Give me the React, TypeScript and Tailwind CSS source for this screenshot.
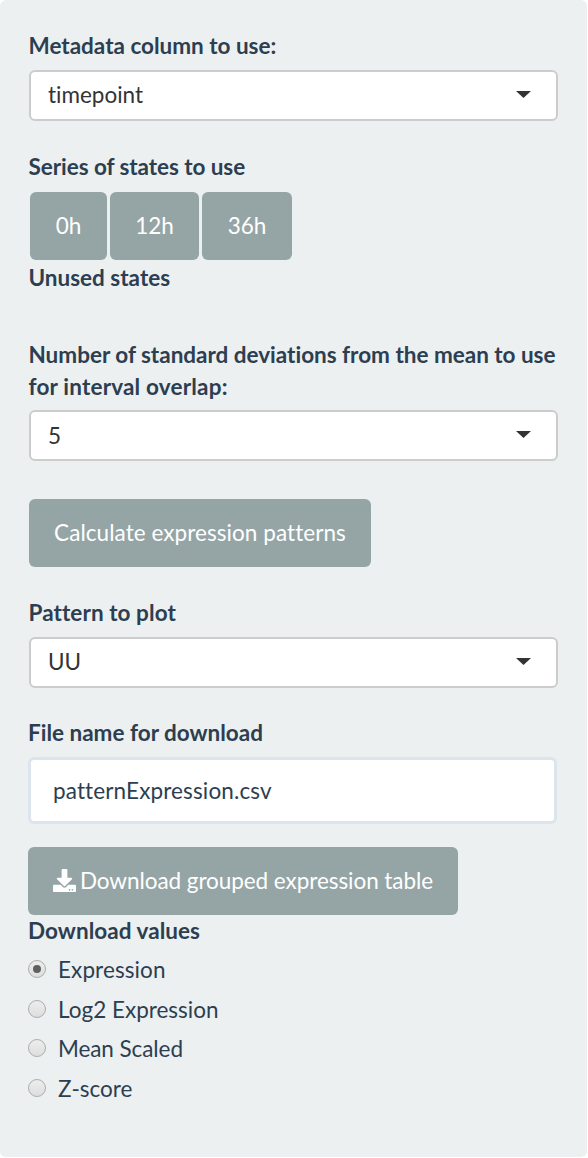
import { useState } from "react";
import type { ReactNode } from "react";
import { FaDownload } from "react-icons/fa";

function Label({ children, className = "" }: { children: ReactNode; className?: string }) {
  return <div className={`text-[22.5px] font-bold leading-8 text-[#2c3e50] ${className}`}>{children}</div>;
}

function Select({ value, className = "", textClass = "pb-[2px]" }: { value: string; className?: string; textClass?: string }) {
  return (
    <button
      type="button"
      className={`flex h-[51px] w-[529px] items-center justify-between rounded-[6px] border-2 border-[#cccccc] bg-white pr-[25px] pl-[17px] text-[22.5px] leading-8 text-[#333333] ${className}`}
    >
      <span className={textClass}>{value}</span>
      <svg width="15" height="7" viewBox="0 0 15 7" className="mb-[2px]">
        <path d="M0 0H15L7.5 7Z" fill="#333333" />
      </svg>
    </button>
  );
}

function Button({ children, className = "" }: { children: ReactNode; className?: string }) {
  return (
    <button
      type="button"
      className={`flex h-[68px] items-center justify-center rounded-[6px] bg-[#95a5a6] text-[22.5px] leading-8 whitespace-nowrap text-white ${className}`}
    >
      {children}
    </button>
  );
}

const values = [
  { name: "Expression", row: "h-10", text: "tracking-[0.1px]" },
  { name: "Log2 Expression", row: "h-10", text: "" },
  { name: "Mean Scaled", row: "h-[38px]", text: "tracking-[-0.08px]" },
  { name: "Z-score", row: "h-[42px]", text: "" },
];

export default function App() {
  const [selected, setSelected] = useState("Expression");
  const [fileName, setFileName] = useState("patternExpression.csv");

  return (
    <div className="h-[1158px] w-[588px] bg-white font-['Lato',sans-serif] [font-variant-ligatures:none]">
      <div className="flex h-[1157px] w-[587px] flex-col items-start rounded-[6px] bg-[#ecf0f1] pt-[30px] pl-[28px]">
        <Label className="pl-[0.5px]">Metadata column to use:</Label>
        <Select value="timepoint" className="mt-[8px] ml-px" />

        <Label className="mt-[30px] pl-[0.5px] tracking-[-0.06px]">Series of states to use</Label>
        <div className="mt-[9px] ml-[2px] flex gap-[3px]">
          <Button className="w-[77px]">0h</Button>
          <Button className="w-[89px]">12h</Button>
          <Button className="w-[90px]">36h</Button>
        </div>
        <Label className="mt-[2px] pl-[0.5px]">Unused states</Label>

        <Label className="mt-[45px] w-[540px] pl-[0.5px]">
          <span className="block tracking-[-0.01px]">Number of standard deviations from the mean to use</span>
          <span className="block tracking-[0.19px]">for interval overlap:</span>
        </Label>
        <Select value="5" className="mt-[7px] ml-px" textClass="" />

        <Button className="mt-[38px] ml-px w-[342px] tracking-[0.06px]">Calculate expression patterns</Button>

        <Label className="mt-[30px] pl-[0.5px] tracking-[0.08px]">Pattern to plot</Label>
        <Select value="UU" className="mt-[8px] ml-px" />

        <Label className="mt-[29px]">File name for download</Label>
        <input
          value={fileName}
          onChange={(e) => setFileName(e.target.value)}
          className="mt-[8px] h-[67px] w-[529px] rounded-[6px] border-[3px] border-[#dce4ec] bg-white px-[22px] text-[22.5px] tracking-[0.13px] text-[#2c3e50] outline-none"
        />

        <Button className="mt-[23px] w-[430px] gap-[4px]">
          <FaDownload size={23} className="-mt-px" />
          <span className="tracking-[-0.06px]">Download grouped expression table</span>
        </Button>

        <Label className="tracking-[0.05px]">Download values</Label>
        <div className="mt-[3px] flex flex-col">
          {values.map(({ name, row, text }) => (
            <label key={name} className={`flex items-center gap-3 text-[22.5px] leading-8 text-[#2c3e50] ${row}`}>
              <input
                type="radio"
                name="values"
                className="sr-only"
                checked={selected === name}
                onChange={() => setSelected(name)}
              />
              <span className="mb-[2px] flex size-[18px] items-center justify-center rounded-full border border-[#acacac] bg-linear-to-b from-[#ededed] to-[#dedede]">
                {selected === name && <span className="size-2 rounded-full bg-[#606060]" />}
              </span>
              <span className={text}>{name}</span>
            </label>
          ))}
        </div>
      </div>
    </div>
  );
}
